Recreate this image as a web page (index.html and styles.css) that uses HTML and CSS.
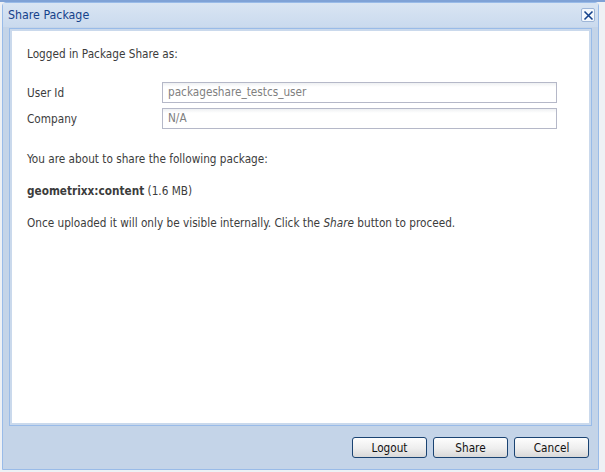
FILE: index.html
```html
<!DOCTYPE html>
<html>
<head>
<meta charset="utf-8">
<link rel="stylesheet" href="styles.css">
</head>
<body>
<div class="page">
  <div class="topbar"></div>
  <div class="window">
    <div class="header">
      <span class="title">Share Package</span>
      <span class="close"><svg width="11" height="11" viewBox="0 0 11 11"><path d="M1.5 1.5 L9.5 9.5 M9.5 1.5 L1.5 9.5" stroke="#15428b" stroke-width="1.6" fill="none"/></svg></span>
    </div>
    <div class="frame">
      <div class="body">
        <p class="intro">Logged in Package Share as:</p>
        <div class="form">
          <div class="row"><label class="label">User Id</label><div class="field">packageshare_testcs_user</div></div>
          <div class="row"><label class="label">Company</label><div class="field">N/A</div></div>
        </div>
        <p class="line">You are about to share the following package:</p>
        <p class="line"><b>geometrixx:content</b> (1.6 MB)</p>
        <p class="line">Once uploaded it will only be visible internally. Click the <i>Share</i> button to proceed.</p>
      </div>
    </div>
    <div class="footer">
      <button class="btn">Logout</button>
      <button class="btn">Share</button>
      <button class="btn">Cancel</button>
    </div>
  </div>
</div>
</body>
</html>
```
FILE: styles.css
```css
html, body { margin: 0; padding: 0; }
body {
  width: 605px; height: 472px; overflow: hidden;
  background: #eef1f5;
  font-family: "DejaVu Sans Condensed", "DejaVu Sans", sans-serif;
  font-size: 11.7px;
  color: #3c3c3c;
}
.page { position: relative; width: 605px; height: 472px; }
.topbar { height: 2px; background: #7fa2d6; }
.window {
  margin-left: 2px;
  width: 597px;
  height: 468px;
  box-sizing: border-box;
  border: 1px solid #99bbe8;
  border-radius: 4px 4px 0 0;
  background: #c4d4e8;
  display: flex; flex-direction: column;
}
.header {
  height: 24px;
  display: flex; align-items: center; justify-content: space-between;
  padding: 0 3px 0 5px;
  background: linear-gradient(#d9e5f3, #cadaee);
}
.title { color: #15428b; font-size: 12.3px; }
.close {
  width: 14px; height: 14px; box-sizing: border-box;
  border: 1px solid #9eb6d8; border-radius: 2px; background: #f4f8fd;
  display: flex; align-items: center; justify-content: center;
}
.frame {
  margin: 1px 6px 0 6px;
  border: 1px solid #99bbe8;
  padding: 2px;
  background: #cad9ec;
  height: 398px;
  box-sizing: border-box;
}
.body {
  background: #fff;
  height: 100%;
  box-sizing: border-box;
  padding: 16px 0 0 15px;
}
.intro { margin: 0 0 21px; }
.form { display: flex; flex-direction: column; gap: 5px; margin-bottom: 22px; }
.row { display: flex; align-items: center; }
.label { width: 135px; color: #3c3c3c; }
.field {
  width: 395px; height: 21px; box-sizing: border-box;
  border: 1px solid #b5b8c8;
  background: linear-gradient(#eef0f2, #fff 4px);
  color: #808080; padding: 0 5px; line-height: 19px;
}
.line { margin: 0 0 16px; line-height: 16px; }
.line b { font-weight: bold; }
.footer {
  flex: 1;
  display: flex; justify-content: flex-end; align-items: center;
  gap: 6px; padding-right: 9px;
}
.btn {
  width: 75px; height: 21px;
  font-family: "DejaVu Sans Condensed", "DejaVu Sans", sans-serif; font-size: 11.7px; color: #111;
  border: 1px solid #1a4372; border-radius: 3px;
  background: linear-gradient(#fdfdfd, #eeeeee 55%, #d8d8d8);
  padding: 0;
}
```
